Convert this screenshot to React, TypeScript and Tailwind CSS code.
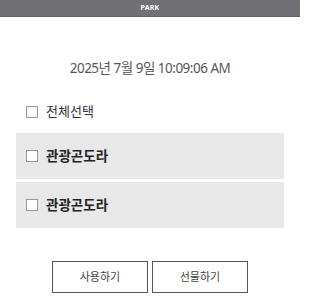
export default function App() {
  return (
    <div
      className="w-[300px] h-[300px] bg-white overflow-hidden flex flex-col"
      style={{ fontFamily: '"Noto Sans", "Noto Sans CJK KR", sans-serif' }}
    >
      <div className="h-[17px] bg-[#717175] flex items-center justify-center border-b border-[#5f5f63]">
        <span className="text-[7px] font-bold text-white tracking-wide">PARK</span>
      </div>

      <div className="mt-[42px] text-center text-[13.5px] tracking-[-0.5px] leading-[18px] text-[#555]">
        2025년 7월 9일 10:09:06 AM
      </div>

      <div className="mt-[25px] flex items-center h-[20px] pl-[26px]">
        <span className="w-[12px] h-[12px] border border-[#999] bg-white" />
        <span className="ml-[8px] text-[13px] text-[#333]">전체선택</span>
      </div>

      <div className="mx-[16px] mt-[11px] flex flex-col gap-[3px]">
        {["관광곤도라", "관광곤도라"].map((t, i) => (
          <div key={i} className="h-[46px] bg-[#e8e8e8] flex items-center pl-[10px]">
            <span className="w-[12px] h-[12px] border border-[#999] bg-white" />
            <span className="ml-[8px] text-[13.5px] font-bold text-[#222]">{t}</span>
          </div>
        ))}
      </div>

      <div className="mt-[33px] flex justify-center gap-[4px]">
        <button className="w-[96px] h-[32px] border border-[#555] bg-white text-[11px] text-[#444]">
          사용하기
        </button>
        <button className="w-[96px] h-[32px] border border-[#555] bg-white text-[11px] text-[#444]">
          선물하기
        </button>
      </div>
    </div>
  );
}
